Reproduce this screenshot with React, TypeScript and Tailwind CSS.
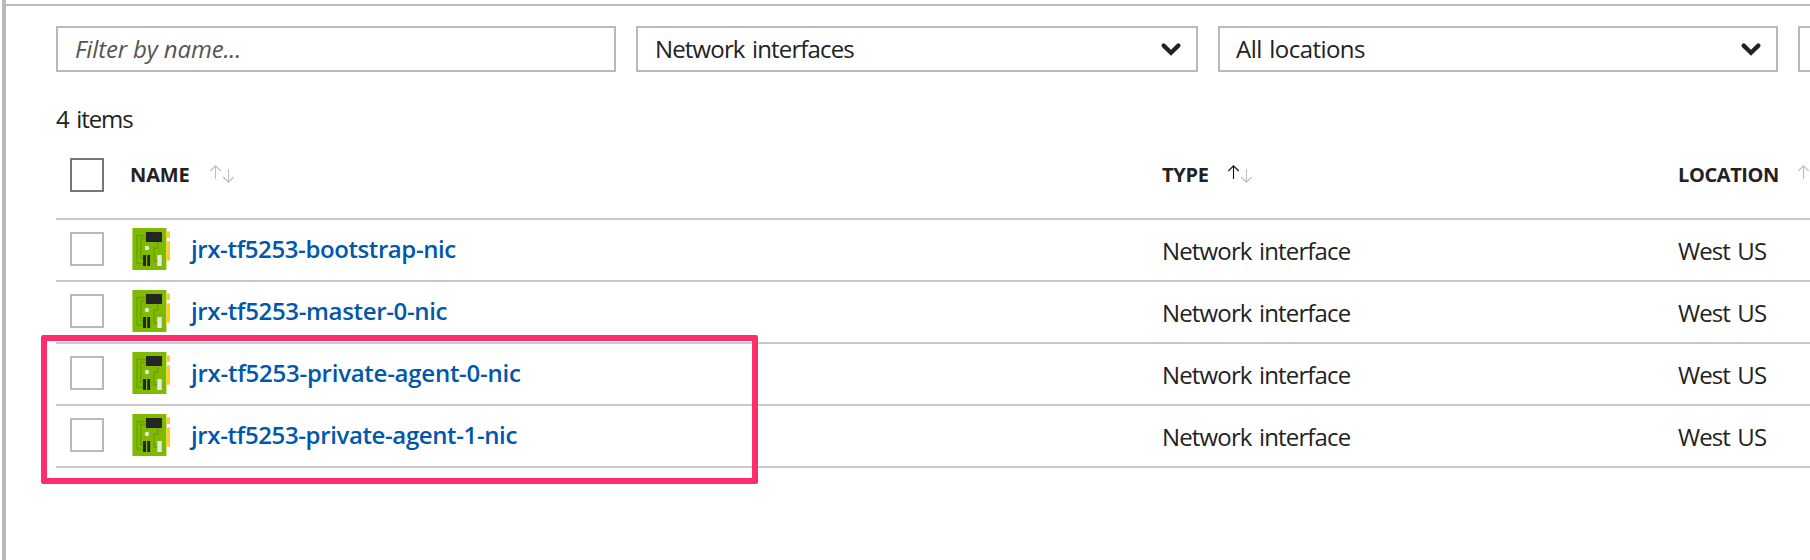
function Chevron() {
  return (
    <svg className="shrink-0" width="20" height="13" viewBox="0 0 20 13" fill="none">
      <path d="M2.7 2.6 L10 9.8 L17.3 2.6" stroke="#222" strokeWidth="4.3" strokeLinecap="round" />
    </svg>
  );
}

function SortArrows({ active = false }: { active?: boolean }) {
  return (
    <svg className="shrink-0" width="24" height="18" viewBox="0 0 24 18" fill="none" strokeWidth="1.1">
      <path d="M5.5 14 V0.9 M0.4 6 L5.5 0.8 L10.8 6" stroke={active ? '#111' : '#bdbdbd'} />
      <path d="M18.5 4 V17.1 M13.1 12 L18.5 17.2 L23.7 12" stroke="#bdbdbd" />
    </svg>
  );
}

function NicIcon() {
  return (
    <svg className="shrink-0" width="38" height="42" viewBox="0 0 38 42">
      <rect width="35" height="42" fill="#c9e39a" />
      <rect x="0.7" width="33.3" height="42" fill="#7fba00" />
      <rect x="34.5" y="3.3" width="3.5" height="6.7" fill="#ffd01a" />
      <rect x="34.5" y="13.3" width="3.5" height="19.4" fill="#ffd01a" />
      <g fill="none" stroke="#6ba000" strokeWidth="1.3">
        <path d="M14 7.5 H5 V35.3 H11" />
        <path d="M14 10.5 H8.7 V30.3 H11" />
        <path d="M25.6 14 V20 H22 V33 H26" />
      </g>
      <rect x="14" y="4" width="16" height="10" fill="#252525" />
      <circle cx="15" cy="20" r="2.2" fill="#e6e6e6" />
      <rect x="11" y="27" width="3" height="11" fill="#252525" />
      <rect x="15.2" y="27" width="2.9" height="11" fill="#252525" />
      <rect x="25.3" y="27" width="4.4" height="11" fill="#e9e9e9" />
    </svg>
  );
}

const rows = [
  { name: 'jrx-tf5253-bootstrap-nic', tracking: 'tracking-[-0.4px]' },
  { name: 'jrx-tf5253-master-0-nic', tracking: 'tracking-[-0.34px]' },
  { name: 'jrx-tf5253-private-agent-0-nic', tracking: 'tracking-[-0.26px]' },
  { name: 'jrx-tf5253-private-agent-1-nic', tracking: 'tracking-[-0.38px]' },
];

export default function App() {
  return (
    <div className="relative flex h-[560px] w-[1810px] overflow-hidden bg-white pl-0.5 font-['Open_Sans',sans-serif] text-2xl text-[#222]">
      <div className="w-1 shrink-0 bg-[#b9b9b9]" />
      <main className="min-w-0 flex-1 pt-1">
        <div className="h-0.5 bg-[#bababa]" />
        <div className="mt-5 ml-[50px] flex h-[46px] whitespace-nowrap">
          <div className="flex w-[560px] shrink-0 items-center border-2 border-[#b9b9b9] pl-[17px] tracking-[-0.15px] text-[#555] italic">
            Filter by name...
          </div>
          <div className="ml-5 flex w-[562px] shrink-0 items-center justify-between border-2 border-[#b9b9b9] pr-[15px] pl-[17px] tracking-[-0.85px] [word-spacing:2px]">
            Network interfaces
            <Chevron />
          </div>
          <div className="ml-5 flex w-[560px] shrink-0 items-center justify-between border-2 border-[#b9b9b9] pr-[15px] pl-4 tracking-[-0.55px] [word-spacing:2px]">
            All locations
            <Chevron />
          </div>
          <div className="ml-5 w-[560px] shrink-0 border-2 border-[#b9b9b9]" />
        </div>
        <p className="mt-[31px] ml-[50px] h-8 tracking-[-1.1px] [word-spacing:2.5px]">4 items</p>
        <div className="ml-[50px]">
          <div className="flex h-[85px] items-start border-b-2 border-[#c9c9c9] pt-[23px] pl-3.5 text-xl font-bold whitespace-nowrap">
            <div className="size-[34px] shrink-0 border-2 border-[#777]" />
            <div className="ml-[26px] flex h-8 w-[1032px] shrink-0 items-center gap-5 tracking-[-0.1px]">
              <span className="pt-0.5">NAME</span>
              <SortArrows />
            </div>
            <div className="flex h-8 w-[516px] shrink-0 items-center gap-[19px] tracking-[-0.3px]">
              <span className="pt-0.5">TYPE</span>
              <SortArrows active />
            </div>
            <div className="flex h-8 shrink-0 items-center gap-[19px] tracking-[-0.4px]">
              <span className="pt-0.5">LOCATION</span>
              <SortArrows />
            </div>
          </div>
          {rows.map((row) => (
            <div key={row.name} className="flex h-[62px] items-center border-b-2 border-[#c9c9c9] pb-0.5 pl-3.5 whitespace-nowrap">
              <div className="size-[34px] shrink-0 border-2 border-[#b9b9b9]" />
              <div className="ml-7 flex w-[1030px] shrink-0 items-center">
                <NicIcon />
                <span className={`ml-[21px] pb-px font-semibold text-[#0058ad] ${row.tracking}`}>{row.name}</span>
              </div>
              <div className="w-[516px] shrink-0 pt-[3px] tracking-[-0.85px] [word-spacing:2px]">Network interface</div>
              <div className="shrink-0 pt-[3px] tracking-[-0.9px] [word-spacing:2px]">West US</div>
            </div>
          ))}
        </div>
      </main>
      <div className="absolute top-[335px] left-[41px] h-[149px] w-[717px] rounded-[2px] border-6 border-[#ff2d6b]" />
    </div>
  );
}
